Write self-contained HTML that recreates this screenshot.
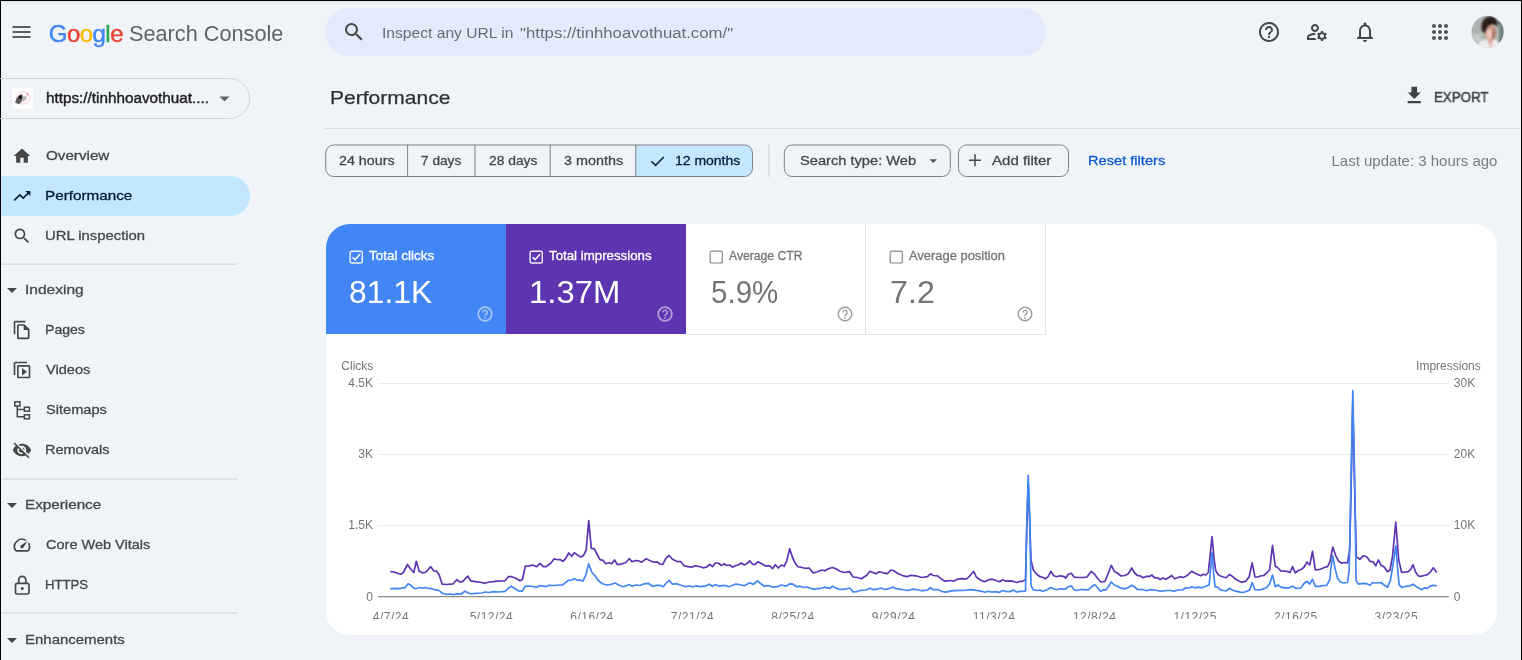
<!DOCTYPE html>
<html lang="en"><head><meta charset="utf-8"><title>Performance - Google Search Console</title>
<style>
html,body{margin:0;padding:0}
body{width:1522px;height:660px;overflow:hidden;background:#f0f4f9;position:relative;font-family:"Liberation Sans",sans-serif}
#app{position:absolute;left:0;top:0;width:1522px;height:660px;overflow:hidden;will-change:transform}
.abs{position:absolute;display:block}
.tx{position:absolute;white-space:pre;display:block;transform-origin:0 0}
</style></head>
<body>
<div id="app">
<!-- shapes -->
<div class="abs" style="left:0;top:0;width:1522px;height:1px;background:#000"></div>
<div class="abs" style="left:0;top:0;width:1px;height:660px;background:#000"></div>
<div class="abs" style="left:1521px;top:0;width:1px;height:660px;background:#000"></div>

<div class="abs" style="left:1px;top:1px;width:1520px;height:5px;background:linear-gradient(#e4e7eb,rgba(240,244,249,0))"></div>
<!-- hamburger -->
<svg class="abs" style="left:12px;top:26px" width="19" height="13" viewBox="0 0 19 13"><g fill="#5a5e63"><rect x="0.5" y="0" width="18" height="2"/><rect x="0.5" y="5" width="18" height="2"/><rect x="0.5" y="10" width="18" height="2"/></g></svg>

<!-- search bar -->
<div class="abs" style="left:325px;top:8px;width:721px;height:48px;border-radius:24px;background:#e2eafb"></div>
<svg class="abs" style="left:341.500px;top:20.250px" width="24" height="24" viewBox="0 0 24 24"><path fill="#444746" d="M15.5 14h-.79l-.28-.27A6.471 6.471 0 0 0 16 9.500 6.500 6.500 0 1 0 9.500 16c1.610 0 3.090-.59 4.230-1.570l.27.28v.79l5 4.990L20.490 19l-4.990-5zm-6 0C7.010 14 5 11.990 5 9.500S7.010 5 9.500 5 14 7.010 14 9.500 11.990 14 9.500 14z"/></svg>

<!-- header icons -->
<svg class="abs" style="left:1257px;top:20px" width="24" height="24" viewBox="0 0 24 24"><path fill="#444746" d="M11 18h2v-2h-2v2zm1-16C6.480 2 2 6.480 2 12s4.480 10 10 10 10-4.480 10-10S17.520 2 12 2zm0 18c-4.410 0-8-3.590-8-8s3.590-8 8-8 8 3.590 8 8-3.590 8-8 8zm0-14c-2.210 0-4 1.790-4 4h2c0-1.100.9-2 2-2s2 .9 2 2c0 2-3 1.750-3 5h2c0-2.250 3-2.500 3-5 0-2.210-1.790-4-4-4z"/></svg>
<svg class="abs" style="left:1305px;top:20px" width="24" height="24" viewBox="0 0 24 24"><g fill="#444746"><path d="M4 18v-.65c0-.34.160-.66.410-.81C6.100 15.530 8.030 15 10 15c.030 0 .050 0 .080.010.100-.7.300-1.370.590-1.980-.22-.02-.44-.03-.67-.03-2.420 0-4.680.67-6.610 1.820-.88.520-1.390 1.500-1.390 2.530V20h9.260c-.42-.6-.75-1.280-.97-2H4zM10 12c2.210 0 4-1.790 4-4s-1.790-4-4-4-4 1.790-4 4 1.790 4 4 4zm0-6c1.100 0 2 .9 2 2s-.9 2-2 2-2-.9-2-2 .9-2 2-2zM20.750 16c0-.22-.03-.42-.06-.63l1.140-1.010-1-1.730-1.450.49c-.32-.27-.68-.48-1.080-.63L18 11h-2l-.3 1.490c-.4.150-.76.360-1.080.63l-1.450-.49-1 1.730 1.140 1.010c-.3.210-.6.410-.6.630s.3.420.6.630l-1.140 1.010 1 1.730 1.450-.49c.32.270.68.480 1.080.63L16 21h2l.3-1.490c.4-.15.760-.36 1.080-.63l1.450.49 1-1.730-1.140-1.010c.03-.21.06-.41.06-.63zM17 18c-1.100 0-2-.9-2-2s.9-2 2-2 2 .9 2 2-.9 2-2 2z"/></g></svg>
<svg class="abs" style="left:1353px;top:20px" width="24" height="24" viewBox="0 0 24 24"><path fill="#444746" d="M12 22c1.100 0 2-.9 2-2h-4c0 1.100.9 2 2 2zm6-6v-5c0-3.070-1.630-5.640-4.500-6.320V4c0-.83-.67-1.500-1.500-1.500s-1.500.67-1.500 1.500v.68C7.640 5.360 6 7.920 6 11v5l-2 2v1h16v-1l-2-2zm-2 1H8v-6c0-2.480 1.510-4.500 4-4.500s4 2.020 4 4.500v6z"/></svg>
<svg class="abs" style="left:1427.500px;top:20.200px" width="24" height="24" viewBox="0 0 24 24"><path fill="#50545a" d="M6,8c1.100,0 2,-0.900 2,-2s-0.900,-2 -2,-2 -2,0.900 -2,2 0.900,2 2,2zM12,20c1.100,0 2,-0.900 2,-2s-0.900,-2 -2,-2 -2,0.900 -2,2 0.900,2 2,2zM6,20c1.100,0 2,-0.900 2,-2s-0.900,-2 -2,-2 -2,0.900 -2,2 0.900,2 2,2zM6,14c1.100,0 2,-0.900 2,-2s-0.900,-2 -2,-2 -2,0.900 -2,2 0.900,2 2,2zM12,14c1.100,0 2,-0.900 2,-2s-0.900,-2 -2,-2 -2,0.900 -2,2 0.900,2 2,2zM16,6c0,1.100 0.900,2 2,2s2,-0.900 2,-2 -0.900,-2 -2,-2 -2,0.900 -2,2zM12,8c1.100,0 2,-0.900 2,-2s-0.900,-2 -2,-2 -2,0.900 -2,2 0.900,2 2,2zM18,14c1.100,0 2,-0.900 2,-2s-0.900,-2 -2,-2 -2,0.900 -2,2 0.900,2 2,2zM18,20c1.100,0 2,-0.900 2,-2s-0.900,-2 -2,-2 -2,0.900 -2,2 0.900,2 2,2z"/></svg>
<!-- avatar -->
<svg class="abs" style="left:1471px;top:15px" width="34" height="34" viewBox="0 0 34 34"><defs><clipPath id="av"><circle cx="16.550" cy="16.700" r="16"/></clipPath><filter id="avb" x="-20%" y="-20%" width="140%" height="140%"><feGaussianBlur stdDeviation="0.850"/></filter></defs><g clip-path="url(#av)"><rect width="34" height="34" fill="#adb3b1"/><g filter="url(#avb)"><rect x="-2" y="19" width="13" height="8" fill="#c6c9c7"/><rect x="25" y="6" width="10" height="24" fill="#6c8280"/><rect x="25.500" y="9" width="2.200" height="16" fill="#c9c4bc"/><path d="M4 36 Q6 26.500 14 24.500 L26 25 Q29 28 29.500 36z" fill="#f2f0ef"/><path d="M16.500 25 L19.500 34 L22 25z" fill="#e3a89b"/><ellipse cx="19.600" cy="18" rx="5.600" ry="7.600" fill="#d09a84"/><ellipse cx="18.200" cy="19" rx="3" ry="5.200" fill="#e9c5b3"/><path d="M22.500 13 q3 5 0 11 q-2 0 -1.500 -5z" fill="#97634f"/><path d="M10.500 14 Q9.500 3.500 18.500 1.200 Q27.500 1.500 27 12.500 Q24.500 8.500 20 10 Q15.500 11.500 15 18 Q11 18 10.500 14z" fill="#2a1c17"/></g></g></svg>

<!-- export icon -->
<svg class="abs" style="left:1402.750px;top:84.300px" width="22.500" height="22.500" viewBox="0 0 24 24"><path fill="#3f4244" d="M19 9h-4V3H9v6H5l7 7 7-7zM5 18v2.500h14V18H5z"/></svg>
<div class="abs" style="left:325px;top:128px;width:1196px;height:1px;background:#dadce0"></div>

<!-- property selector -->
<div class="abs" style="left:-20px;top:78.200px;width:270px;height:40.400px;border-radius:20.200px;border:1.200px solid #d0d4da;box-sizing:border-box"></div>
<div class="abs" style="left:12px;top:88px;width:21px;height:20.500px;background:#fff;border-radius:1px"></div>
<svg class="abs" style="left:12px;top:88px" width="21" height="21" viewBox="0 0 21 21"><defs><filter id="fvb" x="-30%" y="-30%" width="160%" height="160%"><feGaussianBlur stdDeviation="0.650"/></filter></defs><g filter="url(#fvb)"><ellipse cx="11.200" cy="9.800" rx="6.800" ry="6.300" fill="#fcf3f4" stroke="#efc9ce" stroke-width="0.900"/><path d="M3.200 14.800 Q4 8.500 9.500 6 L11.500 9.500 Q10.500 13.500 7 16.200z" fill="#4a4a52" fill-opacity="0.900"/><path d="M6.500 9 Q8 6.800 10 7.200 L9.500 10.500 L7 11z" fill="#0c0c10"/><path d="M10 8.500 Q13.500 7 15 9.500 Q13.500 13 10.500 13.500z" fill="#bdb6ba"/><path d="M14.500 5 l2.200 1 -1.200 2z" fill="#d8808c"/></g></svg>
<svg class="abs" style="left:219px;top:96px" width="11" height="6" viewBox="0 0 11 6"><path d="M0.500 0.500h10l-5 5z" fill="#5f6368"/></svg>

<!-- nav -->
<svg class="abs" style="left:0;top:260px" width="240" height="360" viewBox="0 260 240 360"><path d="M1 264.200H237.400M1 479.050H237.400M1 613.100H237.400" stroke="#cdd1d7" stroke-width="1" fill="none"/></svg>
<div class="abs" style="left:1px;top:176px;width:249px;height:40px;border-radius:0 20px 20px 0;background:#c2e7ff"></div>
<svg class="abs" style="left:12px;top:146px" width="20" height="20" viewBox="0 0 24 24"><path fill="#444746" d="M10 20v-6h4v6h5v-8h3L12 3 2 12h3v8z"/></svg>
<svg class="abs" style="left:12px;top:186px" width="20" height="20" viewBox="0 0 24 24"><path fill="#001d35" d="M16 6l2.290 2.290-4.880 4.880-4-4L2 16.590 3.410 18l6-6 4 4 6.300-6.290L22 12V6z"/></svg>
<svg class="abs" style="left:11.700px;top:226px" width="20" height="20" viewBox="0 0 24 24"><path fill="#444746" d="M15.500 14h-.79l-.28-.27A6.471 6.471 0 0 0 16 9.500 6.500 6.500 0 1 0 9.500 16c1.610 0 3.090-.59 4.230-1.570l.27.28v.79l5 4.990L20.490 19l-4.990-5zm-6 0C7.010 14 5 11.990 5 9.500S7.010 5 9.500 5 14 7.010 14 9.500 11.990 14 9.500 14z"/></svg>
<svg class="abs" style="left:7px;top:288px" width="10" height="5" viewBox="0 0 10 5"><path d="M0 0h10l-5 5z" fill="#444746"/></svg>
<svg class="abs" style="left:12px;top:320px" width="20" height="20" viewBox="0 0 24 24"><path fill="#444746" d="M16 1H4c-1.100 0-2 .9-2 2v14h2V3h12V1zm-1 4H8c-1.100 0-1.990.9-1.990 2L6 21c0 1.100.890 2 1.990 2H19c1.100 0 2-.9 2-2V11l-6-6zM8 21V7h6v5h5v9H8z"/></svg>
<svg class="abs" style="left:12px;top:360px" width="20" height="20" viewBox="0 0 24 24"><path fill="#444746" transform="translate(0,24) scale(1,-1)" d="M4 6H2v14c0 1.100.9 2 2 2h14v-2H4V6zm16-4H8c-1.100 0-2 .9-2 2v12c0 1.100.9 2 2 2h12c1.100 0 2-.9 2-2V4c0-1.100-.9-2-2-2zm0 14H8V4h12v12zM12 5.500v9l6-4.500z"/></svg>
<svg class="abs" style="left:12px;top:398px" width="22" height="24" viewBox="12 398 22 24"><g fill="none" stroke="#444746" stroke-width="1.500"><rect x="14.800" y="401.800" width="5.200" height="4.200"/><rect x="24.400" y="407.200" width="5" height="4"/><rect x="24.400" y="414.800" width="5" height="4"/><path d="M17.300 406 V416.800 H24.400 M17.300 409.500 H24.400"/></g></svg>
<svg class="abs" style="left:12px;top:440px" width="20" height="20" viewBox="0 0 24 24"><path fill="#444746" d="M12 7c2.760 0 5 2.240 5 5 0 .65-.13 1.260-.36 1.830l2.920 2.920c1.510-1.260 2.700-2.890 3.430-4.750-1.730-4.390-6-7.500-11-7.500-1.400 0-2.740.25-3.980.7l2.160 2.160C10.740 7.130 11.350 7 12 7zM2 4.270l2.280 2.280.46.46C3.080 8.300 1.780 10.020 1 12c1.730 4.390 6 7.500 11 7.500 1.550 0 3.030-.3 4.380-.84l.42.42L19.730 22 21 20.730 3.270 3 2 4.270zM7.530 9.800l1.550 1.550c-.5.210-.8.430-.8.650 0 1.660 1.340 3 3 3 .22 0 .44-.3.650-.08l1.550 1.550c-.67.330-1.410.53-2.200.53-2.760 0-5-2.240-5-5 0-.79.200-1.530.53-2.200zm4.310-.78l3.150 3.150.02-.16c0-1.660-1.340-3-3-3l-.17.010z"/></svg>
<svg class="abs" style="left:7px;top:503px" width="10" height="5" viewBox="0 0 10 5"><path d="M0 0h10l-5 5z" fill="#444746"/></svg>
<svg class="abs" style="left:12px;top:535px" width="20" height="20" viewBox="0 0 24 24"><path fill="#444746" d="M20.380 8.570l-1.230 1.850a8 8 0 0 1-.22 7.580H5.070A8 8 0 0 1 15.580 6.850l1.850-1.230A10 10 0 0 0 3.350 19a2 2 0 0 0 1.720 1h13.850a2 2 0 0 0 1.740-1 10 10 0 0 0-.27-10.440zm-9.790 6.840a2 2 0 0 0 2.830 0l5.660-8.490-8.490 5.660a2 2 0 0 0 0 2.830z"/></svg>
<svg class="abs" style="left:12px;top:572px" width="22" height="26" viewBox="12 572 22 26"><g fill="none" stroke="#444746" stroke-width="1.700"><rect x="15.500" y="583.400" width="13.500" height="10.600" rx="1.600"/><path d="M18.700 583.400v-3.200a3.550 3.900 0 0 1 7.100 0v3.200"/></g><circle cx="22.250" cy="588.600" r="1.500" fill="#444746"/></svg>
<svg class="abs" style="left:7px;top:638px" width="10" height="5" viewBox="0 0 10 5"><path d="M0 0h10l-5 5z" fill="#444746"/></svg>

<!-- filter row -->
<svg class="abs" style="left:320px;top:140px" width="760" height="42" viewBox="320 140 760 42">
<defs><clipPath id="seg"><rect x="325.700" y="145" width="426.800" height="31.500" rx="8"/></clipPath></defs>
<rect x="635.700" y="145" width="120" height="31.500" fill="#c2e7ff" clip-path="url(#seg)"/>
<g fill="none" stroke="#7d8085" stroke-width="1">
<rect x="325.700" y="145" width="426.800" height="31.500" rx="8"/>
<path d="M407.600 145V176.500M475 145V176.500M550.200 145V176.500M635.700 145V176.500"/>
<rect x="784.300" y="145" width="166" height="31.500" rx="8"/>
<rect x="958.500" y="145" width="110" height="31.500" rx="8"/>
</g>
<path d="M768.800 144.500V177" stroke="#d3d6db" stroke-width="1.200"/>
<path d="M651.300 161.200 L655.600 165.400 L663.800 157" fill="none" stroke="#0a2540" stroke-width="1.600"/>
<path d="M929.400 159.200h7.600l-3.800 3.800z" fill="#50545a"/>
<path d="M975 154.300v12M969 160.300h12" fill="none" stroke="#444746" stroke-width="1.500"/>
</svg>

<!-- card -->
<div class="abs" style="left:326px;top:224px;width:1171px;height:411px;border-radius:24px;background:#fff;overflow:hidden">
  <div class="abs" style="left:0;top:0;width:180px;height:110px;background:#4285f4"></div>
  <div class="abs" style="left:180px;top:0;width:180px;height:110px;background:#5e35b1"></div>
  <div class="abs" style="left:360px;top:0;width:180px;height:111px;border-right:1px solid #e6e6e6;border-bottom:1px solid #e6e6e6;box-sizing:border-box"></div>
  <div class="abs" style="left:540px;top:0;width:180px;height:111px;border-right:1px solid #e6e6e6;border-bottom:1px solid #e6e6e6;box-sizing:border-box"></div>
</div>

<svg class="abs" style="left:349px;top:249.5px" width="15" height="15" viewBox="0 0 15 15"><rect x="1.100" y="1.200" width="12.200" height="11.800" rx="1.600" fill="none" stroke="#fff" stroke-opacity="0.920" stroke-width="1.400"/><path d="M3.600 7.200 L6.100 9.700 L11 4.300" fill="none" stroke="#fff" stroke-width="1.600"/></svg>
<svg class="abs" style="left:476.9px;top:305.5px" width="16" height="16" viewBox="0 0 16 16"><circle cx="8" cy="8" r="6.800" fill="none" stroke="rgba(255,255,255,0.52)" stroke-width="1.8"/><path d="M5.800 6.500 a2.200 2.200 0 1 1 3.300 1.900 c-.75.450-1.100.8-1.100 1.500" fill="none" stroke="rgba(255,255,255,0.52)" stroke-width="1.6"/><circle cx="8" cy="11.700" r="0.950" fill="rgba(255,255,255,0.52)"/></svg>
<svg class="abs" style="left:529px;top:249.5px" width="15" height="15" viewBox="0 0 15 15"><rect x="1.100" y="1.200" width="12.200" height="11.800" rx="1.600" fill="none" stroke="#fff" stroke-opacity="0.920" stroke-width="1.400"/><path d="M3.600 7.200 L6.100 9.700 L11 4.300" fill="none" stroke="#fff" stroke-width="1.600"/></svg>
<svg class="abs" style="left:656.9px;top:305.5px" width="16" height="16" viewBox="0 0 16 16"><circle cx="8" cy="8" r="6.800" fill="none" stroke="rgba(255,255,255,0.52)" stroke-width="1.8"/><path d="M5.800 6.500 a2.200 2.200 0 1 1 3.300 1.900 c-.75.450-1.100.8-1.100 1.500" fill="none" stroke="rgba(255,255,255,0.52)" stroke-width="1.6"/><circle cx="8" cy="11.700" r="0.950" fill="rgba(255,255,255,0.52)"/></svg>
<svg class="abs" style="left:709px;top:249.5px" width="15" height="15" viewBox="0 0 15 15"><rect x="1.100" y="1.200" width="12.200" height="11.800" rx="1.600" fill="#fff" stroke="#858585" stroke-width="1.200"/></svg>
<svg class="abs" style="left:836.9px;top:305.5px" width="16" height="16" viewBox="0 0 16 16"><circle cx="8" cy="8" r="6.800" fill="none" stroke="#9e9e9e" stroke-width="1.5"/><path d="M5.800 6.500 a2.200 2.200 0 1 1 3.300 1.900 c-.75.450-1.100.8-1.100 1.500" fill="none" stroke="#9e9e9e" stroke-width="1.3"/><circle cx="8" cy="11.700" r="0.950" fill="#9e9e9e"/></svg>
<svg class="abs" style="left:889px;top:249.5px" width="15" height="15" viewBox="0 0 15 15"><rect x="1.100" y="1.200" width="12.200" height="11.800" rx="1.600" fill="#fff" stroke="#858585" stroke-width="1.200"/></svg>
<svg class="abs" style="left:1016.9px;top:305.5px" width="16" height="16" viewBox="0 0 16 16"><circle cx="8" cy="8" r="6.800" fill="none" stroke="#9e9e9e" stroke-width="1.5"/><path d="M5.800 6.500 a2.200 2.200 0 1 1 3.300 1.900 c-.75.450-1.100.8-1.100 1.500" fill="none" stroke="#9e9e9e" stroke-width="1.3"/><circle cx="8" cy="11.700" r="0.950" fill="#9e9e9e"/></svg>
<svg class="abs" style="left:326px;top:340px" width="1171" height="279" viewBox="326 340 1171 279" font-family="'Liberation Sans', sans-serif" font-size="12" fill="#757575">
<line x1="378" x2="1449" y1="383.5" y2="383.5" stroke="#ebebeb" stroke-width="1"/>
<line x1="378" x2="1449" y1="454.5" y2="454.5" stroke="#ebebeb" stroke-width="1"/>
<line x1="378" x2="1449" y1="525.5" y2="525.5" stroke="#ebebeb" stroke-width="1"/>
<line x1="378" x2="1449" y1="596.6" y2="596.6" stroke="#8a8a8a" stroke-width="1.400"/>
<path d="M390.3 571.7 L394.2 572.0 L397.5 573.3 L400.8 574.2 L403.3 572.5 L407.5 564.5 L410.8 569.2 L413.8 572.5 L416.3 561.3 L419.2 571.3 L423.0 573.0 L425.8 572.0 L430.8 566.7 L433.7 570.8 L436.7 571.2 L439.2 575.0 L442.2 584.2 L446.7 584.5 L453.3 583.8 L456.7 579.7 L460.0 582.0 L462.5 581.7 L467.8 576.2 L470.8 580.8 L475.8 581.7 L481.7 582.5 L485.0 583.3 L489.2 582.0 L493.3 581.7 L496.7 581.2 L505.0 580.8 L508.3 576.7 L511.7 576.7 L515.8 578.3 L520.0 580.8 L522.5 579.5 L525.3 566.2 L529.2 565.8 L532.5 565.0 L536.7 566.7 L540.0 563.3 L543.3 566.7 L545.8 566.7 L550.8 563.3 L554.2 558.7 L557.5 559.7 L560.0 559.5 L563.0 561.3 L565.8 558.3 L568.7 553.0 L571.7 556.3 L574.2 552.8 L577.5 555.0 L580.8 557.0 L583.3 555.8 L586.2 550.0 L588.7 520.5 L591.3 548.3 L594.2 548.7 L597.5 555.0 L600.0 559.7 L603.0 560.3 L605.8 563.8 L608.7 562.8 L611.7 563.7 L614.5 560.0 L617.5 564.7 L620.8 564.2 L625.8 562.5 L629.2 558.7 L632.0 561.7 L635.8 560.5 L638.3 560.8 L641.7 562.2 L646.2 558.7 L650.0 560.8 L654.2 562.2 L657.5 562.0 L660.0 564.2 L662.8 564.5 L665.8 558.3 L669.2 555.5 L672.5 559.2 L676.7 561.3 L680.8 561.7 L684.2 565.8 L688.3 566.7 L691.7 567.2 L695.0 565.8 L698.3 566.3 L703.3 567.8 L706.7 567.0 L709.7 564.5 L712.5 566.7 L715.3 563.0 L718.3 563.0 L721.3 565.5 L724.2 563.7 L726.7 565.5 L729.7 565.0 L732.5 567.2 L735.8 565.5 L738.3 565.0 L741.3 563.0 L744.2 565.0 L746.7 563.8 L749.7 560.8 L752.5 564.2 L755.0 564.7 L758.0 561.7 L761.7 563.8 L765.0 565.8 L769.7 565.8 L772.5 568.7 L775.3 564.7 L778.3 568.0 L781.3 565.0 L784.2 566.3 L786.7 560.8 L789.7 548.7 L792.5 557.5 L795.8 564.2 L798.3 567.0 L800.0 567.0 L805.0 568.3 L809.2 568.0 L813.0 572.8 L816.7 572.0 L821.7 570.0 L825.0 570.8 L828.3 568.7 L832.5 567.5 L835.8 568.8 L840.0 571.3 L844.2 572.5 L849.7 571.7 L853.0 577.0 L857.5 577.5 L861.3 578.8 L866.7 575.3 L870.0 571.3 L875.8 573.8 L879.2 571.7 L883.3 572.8 L887.5 573.7 L890.8 570.0 L893.3 570.5 L898.3 573.8 L903.3 575.8 L907.5 576.7 L910.8 575.3 L915.8 575.8 L921.7 577.5 L927.5 576.7 L930.5 573.8 L933.3 575.5 L937.5 575.8 L941.7 579.2 L945.0 581.2 L950.8 580.5 L953.3 581.2 L957.5 579.2 L961.7 578.7 L965.0 579.2 L967.5 578.3 L970.8 574.7 L973.7 571.3 L976.3 577.0 L980.0 579.7 L983.3 581.3 L985.8 581.3 L989.2 579.5 L992.5 579.2 L996.7 580.8 L999.7 581.7 L1002.5 579.7 L1005.8 581.2 L1010.0 580.8 L1013.3 581.3 L1016.7 582.5 L1020.0 581.3 L1022.5 581.3 L1025.5 580.0 L1026.8 526.7 L1028.2 483.3 L1029.7 523.3 L1031.0 560.0 L1033.3 570.0 L1036.7 574.2 L1040.0 576.7 L1043.3 577.5 L1045.3 578.8 L1048.3 576.3 L1050.8 571.3 L1053.7 575.8 L1056.7 576.7 L1060.0 575.8 L1063.3 576.3 L1065.8 578.0 L1068.3 574.2 L1071.3 573.3 L1074.2 577.2 L1078.3 577.5 L1083.3 577.5 L1087.0 577.0 L1091.3 571.3 L1094.2 573.8 L1097.5 578.3 L1100.8 582.0 L1105.0 581.3 L1108.3 573.3 L1111.3 565.3 L1114.2 571.2 L1117.5 573.3 L1120.8 575.8 L1125.0 575.5 L1128.3 573.8 L1131.7 568.0 L1134.7 573.0 L1137.5 575.5 L1140.8 576.2 L1143.3 577.8 L1146.7 576.2 L1149.2 576.7 L1151.7 575.0 L1155.0 578.0 L1157.5 577.8 L1160.0 579.5 L1163.0 578.0 L1165.8 579.2 L1169.2 577.2 L1171.7 575.5 L1174.7 578.8 L1177.5 577.8 L1180.0 576.7 L1183.3 577.5 L1186.7 575.8 L1191.7 571.3 L1195.0 573.3 L1198.3 574.7 L1200.8 575.8 L1203.3 574.2 L1205.8 575.0 L1208.3 572.5 L1210.0 556.7 L1212.0 536.7 L1214.2 560.0 L1215.8 570.8 L1218.3 574.7 L1220.0 575.8 L1223.3 577.0 L1226.3 577.8 L1229.2 574.5 L1231.7 575.8 L1235.0 578.7 L1238.3 580.8 L1241.7 582.2 L1245.8 581.3 L1249.2 576.7 L1252.2 562.8 L1255.0 577.0 L1258.3 577.0 L1260.8 575.8 L1263.7 575.5 L1266.7 573.0 L1269.7 569.7 L1272.5 545.3 L1275.3 566.3 L1277.5 567.5 L1280.8 570.8 L1284.2 571.2 L1288.3 571.7 L1290.0 572.5 L1292.5 566.7 L1295.3 572.8 L1298.3 570.5 L1301.7 569.2 L1304.2 567.0 L1307.0 562.0 L1309.7 565.0 L1312.5 551.3 L1315.3 570.0 L1318.3 569.7 L1321.7 568.8 L1325.0 567.2 L1327.5 566.7 L1330.0 561.7 L1332.8 547.0 L1335.8 555.8 L1338.7 561.3 L1341.7 563.3 L1344.2 562.5 L1347.5 563.0 L1349.7 550.0 L1350.7 506.7 L1352.8 403.3 L1355.0 506.7 L1356.3 556.7 L1360.0 559.2 L1363.3 555.8 L1366.7 556.7 L1370.0 561.3 L1373.0 561.7 L1375.8 565.8 L1378.3 560.0 L1381.3 565.3 L1384.2 567.0 L1387.5 571.7 L1390.0 570.0 L1392.5 556.7 L1395.8 522.2 L1398.7 560.0 L1401.7 572.5 L1405.0 572.0 L1408.3 571.7 L1410.8 569.2 L1413.0 564.7 L1415.8 572.5 L1418.3 575.8 L1420.8 576.3 L1424.2 575.5 L1427.5 574.7 L1430.3 572.0 L1433.3 567.8 L1436.7 572.5" fill="none" stroke="#5e35b1" stroke-width="1.700" stroke-linejoin="round"/>
<path d="M390.3 588.8 L394.2 588.3 L400.0 588.7 L402.5 587.8 L405.0 587.8 L408.0 583.8 L410.8 585.3 L413.3 587.8 L415.8 588.7 L420.0 587.5 L422.5 588.3 L425.0 587.5 L428.3 588.3 L431.7 588.7 L435.0 589.7 L439.2 590.5 L442.2 593.3 L445.8 594.3 L450.0 594.0 L453.3 594.7 L456.7 593.7 L460.8 594.2 L465.0 591.2 L468.3 593.0 L470.8 593.8 L475.8 593.3 L481.7 593.0 L485.0 592.0 L488.3 592.5 L493.3 591.7 L498.3 592.0 L505.0 591.3 L508.3 588.3 L511.3 586.2 L514.2 588.0 L518.3 590.8 L522.0 591.2 L525.3 586.3 L529.2 586.0 L536.7 587.2 L540.0 585.5 L545.8 586.7 L549.2 585.3 L554.2 585.5 L559.2 585.0 L562.5 585.0 L568.3 580.3 L571.7 580.0 L574.2 578.7 L577.5 580.3 L580.0 580.0 L583.0 581.2 L585.8 575.0 L588.7 563.8 L591.7 572.0 L595.0 575.8 L598.3 580.5 L602.5 583.7 L606.7 585.0 L610.8 584.5 L615.0 583.0 L619.2 585.3 L623.3 586.7 L629.2 584.5 L632.0 586.2 L635.8 585.0 L640.0 585.5 L644.2 583.8 L648.3 583.3 L652.5 586.2 L656.7 585.3 L660.0 585.3 L663.3 586.7 L666.3 583.0 L669.2 580.3 L672.5 584.2 L676.7 583.7 L680.8 585.3 L685.8 586.7 L689.2 585.8 L692.5 587.0 L696.7 585.8 L700.8 586.7 L705.0 586.2 L709.2 584.2 L712.5 586.3 L715.3 584.5 L719.2 586.2 L724.2 585.3 L728.3 586.7 L731.7 585.8 L735.0 584.2 L739.2 584.5 L744.2 585.8 L750.0 582.8 L753.0 584.5 L757.5 580.8 L760.3 583.3 L764.2 586.2 L768.3 585.5 L773.3 587.2 L778.3 586.3 L781.3 585.0 L784.2 585.8 L786.7 585.8 L790.0 583.8 L793.0 584.2 L796.7 586.7 L800.0 586.3 L804.2 587.5 L806.7 587.0 L813.3 589.2 L820.8 588.3 L824.2 587.2 L830.0 588.3 L832.5 586.2 L835.8 588.0 L840.0 589.5 L845.0 589.2 L849.7 588.0 L853.3 592.0 L856.7 591.7 L860.8 590.3 L865.8 590.0 L870.0 588.3 L873.3 589.7 L876.7 589.2 L880.8 588.0 L885.0 589.5 L890.0 588.3 L893.0 587.0 L895.8 588.7 L901.7 589.5 L907.5 590.5 L913.3 589.2 L916.7 589.5 L921.7 590.8 L927.5 590.0 L930.5 587.8 L933.3 589.7 L937.5 589.5 L941.7 591.3 L945.8 592.2 L951.7 590.8 L959.2 590.3 L963.3 590.5 L970.8 589.7 L976.7 590.3 L981.7 591.3 L985.0 592.2 L988.3 591.3 L991.7 592.0 L995.8 591.7 L999.2 592.5 L1002.5 590.5 L1005.8 591.3 L1010.0 591.7 L1013.3 590.0 L1016.7 592.0 L1020.0 591.3 L1025.5 591.2 L1026.8 523.3 L1028.2 475.3 L1029.7 515.0 L1031.0 585.8 L1033.3 589.7 L1036.7 590.5 L1039.7 590.0 L1042.5 591.3 L1046.7 590.0 L1050.8 587.5 L1053.7 588.7 L1056.7 589.7 L1060.0 588.8 L1065.0 589.2 L1068.3 586.7 L1071.3 585.8 L1074.2 589.7 L1076.7 590.5 L1080.8 589.5 L1085.0 589.7 L1088.3 590.0 L1091.7 586.7 L1094.5 584.7 L1097.5 587.5 L1100.5 591.2 L1103.3 589.7 L1105.8 590.0 L1108.3 586.7 L1111.3 582.0 L1114.2 585.0 L1117.5 586.3 L1120.0 587.8 L1125.0 588.8 L1128.3 587.5 L1131.7 585.3 L1134.7 587.0 L1137.5 589.5 L1143.3 589.7 L1146.7 590.8 L1150.0 589.7 L1155.0 590.0 L1160.0 591.3 L1166.7 590.5 L1170.8 590.5 L1174.2 591.3 L1177.5 590.0 L1182.5 590.0 L1185.8 587.8 L1189.2 588.0 L1191.7 586.7 L1195.0 587.8 L1198.3 587.2 L1201.7 587.8 L1205.8 586.2 L1209.2 584.7 L1210.5 570.0 L1212.0 552.5 L1213.3 570.0 L1215.0 586.7 L1218.3 587.5 L1220.0 589.7 L1223.3 590.5 L1226.3 590.8 L1229.2 588.3 L1231.7 589.7 L1235.8 591.2 L1240.0 592.2 L1243.3 592.5 L1246.7 591.2 L1249.7 590.0 L1252.2 582.5 L1255.0 589.7 L1259.2 590.0 L1262.5 589.2 L1266.7 587.5 L1269.7 583.8 L1272.5 575.0 L1275.3 586.7 L1278.0 585.0 L1280.8 587.2 L1284.2 587.8 L1289.2 587.8 L1292.5 586.2 L1295.8 588.3 L1300.8 588.0 L1304.2 583.3 L1307.0 581.3 L1309.7 584.2 L1312.5 579.2 L1315.3 586.3 L1319.2 586.3 L1323.3 585.5 L1326.7 585.3 L1329.7 580.0 L1331.3 565.0 L1332.8 555.8 L1335.0 568.3 L1337.5 578.3 L1340.0 581.7 L1343.3 583.0 L1347.5 582.5 L1349.2 570.0 L1350.5 506.7 L1352.8 390.7 L1355.2 506.7 L1356.0 580.0 L1358.3 584.2 L1363.3 583.3 L1366.7 583.7 L1370.0 585.3 L1372.5 582.5 L1375.8 583.0 L1380.8 582.5 L1384.2 585.0 L1387.5 587.2 L1390.3 580.8 L1393.0 565.0 L1395.8 545.8 L1398.0 573.3 L1399.2 585.0 L1402.0 587.5 L1405.8 586.3 L1410.0 585.8 L1413.0 584.2 L1415.8 586.3 L1419.2 588.3 L1421.7 589.7 L1424.7 587.8 L1427.5 588.3 L1430.3 585.8 L1433.3 585.3 L1436.7 585.8" fill="none" stroke="#4285f4" stroke-width="1.700" stroke-linejoin="round"/>
<text x="341.300" y="369.800">Clicks</text>
<text x="372.900" y="386.8" text-anchor="end">4.5K</text>
<text x="372.900" y="457.8" text-anchor="end">3K</text>
<text x="372.900" y="528.8" text-anchor="end">1.5K</text>
<text x="372.900" y="601.0" text-anchor="end">0</text>
<text x="1480.800" y="369.800" text-anchor="end">Impressions</text>
<text x="1453.800" y="386.8">30K</text>
<text x="1453.800" y="457.8">20K</text>
<text x="1453.800" y="528.8">10K</text>
<text x="1453.800" y="601.0">0</text>
<text x="390.9" y="620.800" text-anchor="middle" letter-spacing="0.500">4/7/24</text>
<text x="491.4" y="620.800" text-anchor="middle" letter-spacing="0.500">5/12/24</text>
<text x="592.0" y="620.800" text-anchor="middle" letter-spacing="0.500">6/16/24</text>
<text x="692.5" y="620.800" text-anchor="middle" letter-spacing="0.500">7/21/24</text>
<text x="793.0" y="620.800" text-anchor="middle" letter-spacing="0.500">8/25/24</text>
<text x="893.6" y="620.800" text-anchor="middle" letter-spacing="0.500">9/29/24</text>
<text x="994.1" y="620.800" text-anchor="middle" letter-spacing="0.500">11/3/24</text>
<text x="1094.7" y="620.800" text-anchor="middle" letter-spacing="0.500">12/8/24</text>
<text x="1195.2" y="620.800" text-anchor="middle" letter-spacing="0.500">1/12/25</text>
<text x="1295.8" y="620.800" text-anchor="middle" letter-spacing="0.500">2/16/25</text>
<text x="1396.3" y="620.800" text-anchor="middle" letter-spacing="0.500">3/23/25</text>
</svg>
<span class="tx" style="left:48.800px;top:21.7px;font-size:24px;line-height:24px;letter-spacing:-0.550px;-webkit-text-stroke:0.450px"><span style="color:#4285f4">G</span><span style="color:#ea4335">o</span><span style="color:#fbbc05">o</span><span style="color:#4285f4">g</span><span style="color:#34a853">l</span><span style="color:#ea4335">e</span></span>
<span class="tx" style="left:129.2px;top:22.7px;font-size:22px;line-height:22px;font-weight:400;color:#5f6368;transform:scaleX(0.9865);">Search Console</span>
<span class="tx" style="left:382.3px;top:24.6px;font-size:15.5px;line-height:15.5px;font-weight:400;color:#686d74;transform:scaleX(1.0082);">Inspect any URL in</span>
<span class="tx" style="left:519.6px;top:24.6px;font-size:15.5px;line-height:15.5px;font-weight:400;color:#686d74;transform:scaleX(1.0813);">&quot;https://tinhhoavothuat.com/&quot;</span>
<span class="tx" style="left:329.9px;top:88.4px;font-size:19px;line-height:19px;font-weight:400;-webkit-text-stroke:0.25px;color:#2d3034;transform:scaleX(1.1063);">Performance</span>
<span class="tx" style="left:1433.6px;top:89.8px;font-size:14px;line-height:14px;font-weight:400;-webkit-text-stroke:0.50px;color:#444746;transform:scaleX(0.9514);">EXPORT</span>
<span class="tx" style="left:46.4px;top:91.1px;font-size:14px;line-height:14px;font-weight:400;-webkit-text-stroke:0.40px;color:#1f1f1f;transform:scaleX(1.0913);">https://tinhhoavothuat....</span>
<span class="tx" style="left:46.4px;top:149.3px;font-size:13.5px;line-height:13.5px;font-weight:400;-webkit-text-stroke:0.30px;color:#444746;transform:scaleX(1.1254);">Overview</span>
<span class="tx" style="left:45.3px;top:189.3px;font-size:13.5px;line-height:13.5px;font-weight:400;-webkit-text-stroke:0.30px;color:#001d35;transform:scaleX(1.1297);">Performance</span>
<span class="tx" style="left:45.3px;top:229.3px;font-size:13.5px;line-height:13.5px;font-weight:400;-webkit-text-stroke:0.30px;color:#444746;transform:scaleX(1.0995);">URL inspection</span>
<span class="tx" style="left:24.8px;top:283.3px;font-size:13.5px;line-height:13.5px;font-weight:400;-webkit-text-stroke:0.30px;color:#444746;transform:scaleX(1.1508);">Indexing</span>
<span class="tx" style="left:45.4px;top:323.3px;font-size:13.5px;line-height:13.5px;font-weight:400;-webkit-text-stroke:0.30px;color:#444746;transform:scaleX(1.0419);">Pages</span>
<span class="tx" style="left:46.4px;top:363.3px;font-size:13.5px;line-height:13.5px;font-weight:400;-webkit-text-stroke:0.30px;color:#444746;transform:scaleX(1.0803);">Videos</span>
<span class="tx" style="left:46.4px;top:403.3px;font-size:13.5px;line-height:13.5px;font-weight:400;-webkit-text-stroke:0.30px;color:#444746;transform:scaleX(1.0810);">Sitemaps</span>
<span class="tx" style="left:45.3px;top:443.3px;font-size:13.5px;line-height:13.5px;font-weight:400;-webkit-text-stroke:0.30px;color:#444746;transform:scaleX(1.0731);">Removals</span>
<span class="tx" style="left:24.9px;top:498.3px;font-size:13.5px;line-height:13.5px;font-weight:400;-webkit-text-stroke:0.30px;color:#444746;transform:scaleX(1.1282);">Experience</span>
<span class="tx" style="left:46.4px;top:538.3px;font-size:13.5px;line-height:13.5px;font-weight:400;-webkit-text-stroke:0.30px;color:#444746;transform:scaleX(1.0751);">Core Web Vitals</span>
<span class="tx" style="left:45.4px;top:578.3px;font-size:13.5px;line-height:13.5px;font-weight:400;-webkit-text-stroke:0.30px;color:#444746;transform:scaleX(0.9735);">HTTPS</span>
<span class="tx" style="left:24.9px;top:633.3px;font-size:13.5px;line-height:13.5px;font-weight:400;-webkit-text-stroke:0.30px;color:#444746;transform:scaleX(1.1085);">Enhancements</span>
<span class="tx" style="left:338.7px;top:154.1px;font-size:13.5px;line-height:13.5px;font-weight:400;-webkit-text-stroke:0.30px;color:#444746;transform:scaleX(1.0571);">24 hours</span>
<span class="tx" style="left:421.1px;top:154.1px;font-size:13.5px;line-height:13.5px;font-weight:400;-webkit-text-stroke:0.30px;color:#444746;transform:scaleX(1.0119);">7 days</span>
<span class="tx" style="left:488.5px;top:154.1px;font-size:13.5px;line-height:13.5px;font-weight:400;-webkit-text-stroke:0.30px;color:#444746;transform:scaleX(1.0246);">28 days</span>
<span class="tx" style="left:563.7px;top:154.1px;font-size:13.5px;line-height:13.5px;font-weight:400;-webkit-text-stroke:0.30px;color:#444746;transform:scaleX(1.0649);">3 months</span>
<span class="tx" style="left:674.6px;top:154.1px;font-size:13.5px;line-height:13.5px;font-weight:400;-webkit-text-stroke:0.30px;color:#001d35;transform:scaleX(1.0339);">12 months</span>
<span class="tx" style="left:800.4px;top:154.1px;font-size:13.5px;line-height:13.5px;font-weight:400;-webkit-text-stroke:0.30px;color:#444746;transform:scaleX(1.0849);">Search type: Web</span>
<span class="tx" style="left:992.3px;top:154.1px;font-size:13.5px;line-height:13.5px;font-weight:400;-webkit-text-stroke:0.30px;color:#444746;transform:scaleX(1.1138);">Add filter</span>
<span class="tx" style="left:1087.7px;top:154.1px;font-size:13.5px;line-height:13.5px;font-weight:400;-webkit-text-stroke:0.30px;color:#0b57d0;transform:scaleX(1.0834);">Reset filters</span>
<span class="tx" style="left:1331.5px;top:153.3px;font-size:15px;line-height:15px;font-weight:400;color:#787c82;">Last update: 3 hours ago</span>
<span class="tx" style="left:368.6px;top:249.8px;font-size:12.5px;line-height:12.5px;font-weight:400;-webkit-text-stroke:0.30px;color:#ffffff;transform:scaleX(1.0817);">Total clicks</span>
<span class="tx" style="left:349.4px;top:276.1px;font-size:32px;line-height:32px;font-weight:400;color:#ffffff;transform:scaleX(0.9942);">81.1K</span>
<span class="tx" style="left:548.6px;top:249.8px;font-size:12.5px;line-height:12.5px;font-weight:400;-webkit-text-stroke:0.30px;color:#ffffff;transform:scaleX(1.0622);">Total impressions</span>
<span class="tx" style="left:529.1px;top:276.1px;font-size:32px;line-height:32px;font-weight:400;color:#ffffff;transform:scaleX(1.0260);">1.37M</span>
<span class="tx" style="left:728.6px;top:249.8px;font-size:12.5px;line-height:12.5px;font-weight:400;-webkit-text-stroke:0.30px;color:#757575;transform:scaleX(0.9739);">Average CTR</span>
<span class="tx" style="left:710.6px;top:276.1px;font-size:32px;line-height:32px;font-weight:400;color:#757575;transform:scaleX(0.9233);">5.9%</span>
<span class="tx" style="left:908.6px;top:249.8px;font-size:12.5px;line-height:12.5px;font-weight:400;-webkit-text-stroke:0.30px;color:#757575;transform:scaleX(1.0330);">Average position</span>
<span class="tx" style="left:890.0px;top:276.1px;font-size:32px;line-height:32px;font-weight:400;color:#757575;transform:scaleX(1.0073);">7.2</span>
</div>
</body></html>
